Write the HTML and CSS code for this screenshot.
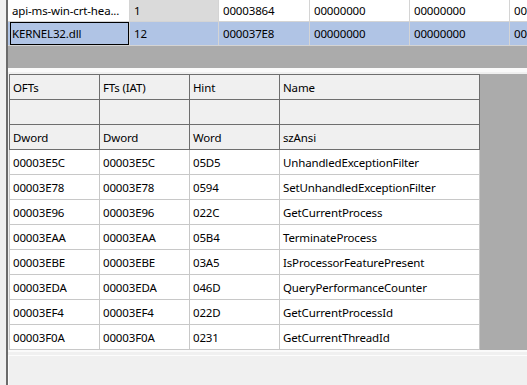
FILE: index.html
```html
<!DOCTYPE html>
<html lang="en">
<head>
    <meta charset="UTF-8">
    <meta name="viewport" content="width=device-width, initial-scale=1.0">
    <title>Import Directory</title>
    <link rel="stylesheet" href="styles.css">
</head>
<body>
    <div class="frame">
        <div class="pane-top">
            <div class="modules">
                <div class="cell">api-ms-win-crt-hea...</div>
                <div class="cell readonly">1</div>
                <div class="cell">00003864</div>
                <div class="cell">00000000</div>
                <div class="cell">00000000</div>
                <div class="cell">00000000</div>

                <div class="cell selected focus">KERNEL32.dll</div>
                <div class="cell selected">12</div>
                <div class="cell selected">000037E8</div>
                <div class="cell selected">00000000</div>
                <div class="cell selected">00000000</div>
                <div class="cell selected">00000000</div>
            </div>
        </div>

        <div class="splitter"></div>

        <div class="pane-bottom">
            <div class="grid-wrap">
                <div class="thunks">
                    <!-- header rows -->
                    <div class="cell head first top">OFTs</div>
                    <div class="cell head top">FTs (IAT)</div>
                    <div class="cell head top">Hint</div>
                    <div class="cell head top">Name</div>

                    <div class="cell head first"></div>
                    <div class="cell head"></div>
                    <div class="cell head"></div>
                    <div class="cell head"></div>

                    <div class="cell head first">Dword</div>
                    <div class="cell head">Dword</div>
                    <div class="cell head">Word</div>
                    <div class="cell head">szAnsi</div>

                    <!-- imported functions -->
                    <div class="cell first">00003E5C</div>
                    <div class="cell">00003E5C</div>
                    <div class="cell">05D5</div>
                    <div class="cell">UnhandledExceptionFilter</div>

                    <div class="cell first">00003E78</div>
                    <div class="cell">00003E78</div>
                    <div class="cell">0594</div>
                    <div class="cell">SetUnhandledExceptionFilter</div>

                    <div class="cell first">00003E96</div>
                    <div class="cell">00003E96</div>
                    <div class="cell">022C</div>
                    <div class="cell">GetCurrentProcess</div>

                    <div class="cell first">00003EAA</div>
                    <div class="cell">00003EAA</div>
                    <div class="cell">05B4</div>
                    <div class="cell">TerminateProcess</div>

                    <div class="cell first">00003EBE</div>
                    <div class="cell">00003EBE</div>
                    <div class="cell">03A5</div>
                    <div class="cell">IsProcessorFeaturePresent</div>

                    <div class="cell first">00003EDA</div>
                    <div class="cell">00003EDA</div>
                    <div class="cell">046D</div>
                    <div class="cell">QueryPerformanceCounter</div>

                    <div class="cell first">00003EF4</div>
                    <div class="cell">00003EF4</div>
                    <div class="cell">022D</div>
                    <div class="cell">GetCurrentProcessId</div>

                    <div class="cell first">00003F0A</div>
                    <div class="cell">00003F0A</div>
                    <div class="cell">0231</div>
                    <div class="cell">GetCurrentThreadId</div>
                </div>
            </div>
            <div class="gap-line"></div>
            <div class="status"></div>
        </div>
    </div>
</body>
</html>
```

FILE: styles.css
```css
body {
    font-family: 'Noto Sans', 'Open Sans', sans-serif;
    font-size: 11.5px;
    letter-spacing: -0.15px;
    margin: 0;
    background-color: #f0f0f0;
    color: #000;
    overflow: hidden;
}

.frame {
    margin-left: 6px;
    height: 385px;
    border-left: 2px solid #6b6b6b;
}

/* upper grid: imported modules */

.pane-top {
    height: 68px;
    background-color: #ababab;
    overflow: hidden;
}

.modules {
    display: grid;
    grid-template-columns: 122px 89px 91px 100px 100px 100px;
    grid-template-rows: 22px 24px;
}

.modules .cell {
    padding-left: 4px;
    border-right: 1px solid #d4d4d4;
    border-bottom: 1px solid #d4d4d4;
}

.cell {
    position: relative;
    display: flex;
    align-items: center;
    box-sizing: border-box;
    background-color: white;
    white-space: nowrap;
    overflow: hidden;
}

.cell.readonly {
    background-color: #dadada;
}

.cell.selected {
    background-color: #b0c4e5;
}

.cell.focus::after {
    content: "";
    position: absolute;
    top: 0;
    bottom: 0;
    left: 2px;
    right: 0;
    border: 1px solid #000;
}

.splitter {
    height: 4px;
    background-color: #fafafa;
}

/* lower grid: thunks */

.pane-bottom {
    padding: 2px 0 0 1px;
}

.grid-wrap {
    height: 276px;
    background-color: #ababab;
}

.thunks {
    display: grid;
    grid-template-columns: 91px 90px 90px 200px;
    grid-template-rows: 26px repeat(10, 25px);
}

.thunks .cell {
    padding-left: 3px;
    border-right: 1px solid #c8c8c8;
    border-bottom: 1px solid #c8c8c8;
}

.thunks .cell.first {
    border-left: 1px solid #c8c8c8;
}

.thunks .cell.head {
    background-color: #f0f0f0;
    border-color: #6e6e6e;
}

.thunks .cell.top {
    border-top: 1px solid #6e6e6e;
}

.gap-line {
    height: 2px;
    margin-left: -1px;
    background-color: #fafafa;
}

.status {
    margin: 3px 0 0 -1px;
    height: 40px;
    border-top: 1px solid #fcfcfc;
    border-left: 1px solid #fcfcfc;
}
```
